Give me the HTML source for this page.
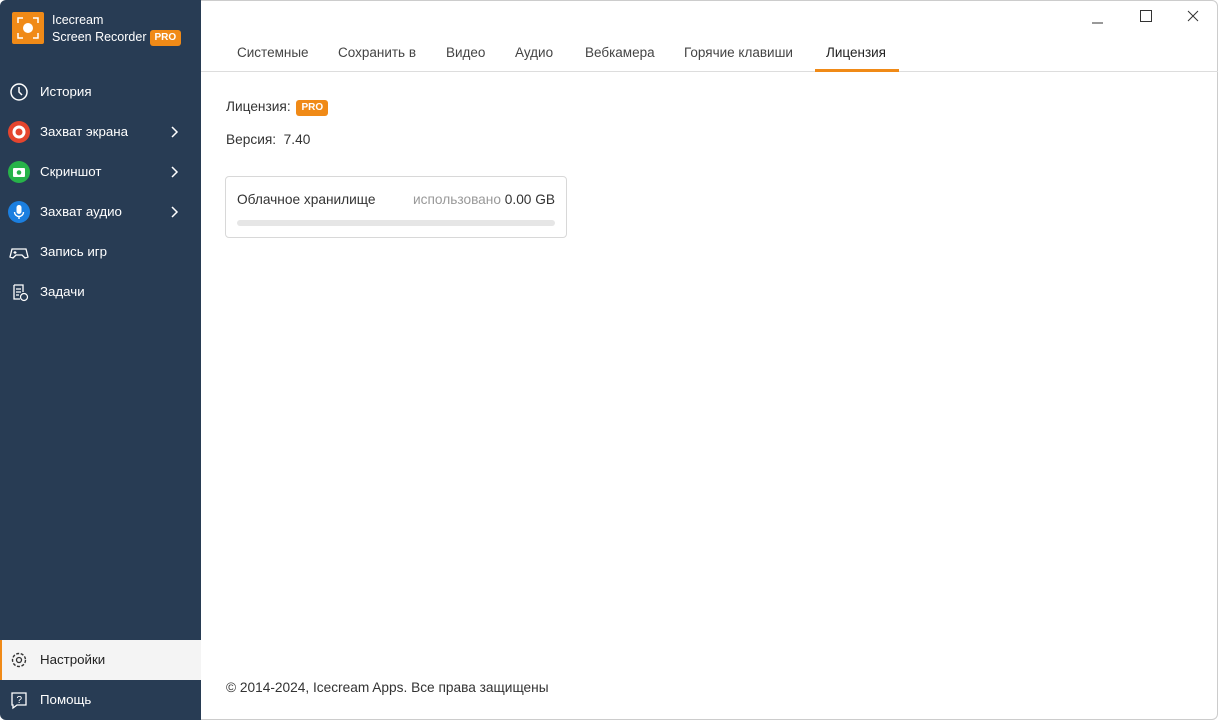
<!DOCTYPE html>
<html><head><meta charset="utf-8"><style>
*{box-sizing:border-box;margin:0;padding:0}
body{width:1218px;height:720px;overflow:hidden;background:#fff;font-family:"Liberation Sans","DejaVu Sans",sans-serif;position:relative}
.side{position:absolute;left:0;top:0;width:201px;height:720px;background:#283c54;border-radius:6px 0 0 6px}
.logo{position:absolute;left:12px;top:12px;width:32px;height:32px;background:#f08a17;border-radius:2px}
.brand{position:absolute;left:52px;top:12px;color:#fff;font-size:12.5px;line-height:17px}
.pro{display:inline-block;background:#f08a17;color:#fff;font-weight:bold;font-size:10px;padding:0 5px;border-radius:3px;line-height:16px;vertical-align:1px;margin-left:3px}
.it{position:absolute;left:0;width:201px;height:40px;color:#fff;font-size:13.3px;line-height:40px;padding-left:40px}
.ic{position:absolute;left:8px;top:9px;width:22px;height:22px}
.ch{position:absolute;left:171px;top:14px}
.sel{background:#f4f4f4;color:#222;border-left:2px solid #f08a17;padding-left:38px}
.tabs{position:absolute;left:201px;top:32px;right:0;height:40px;border-bottom:1px solid #ddd}
.tab{position:absolute;top:13px;font-size:13.5px;color:#444}
.t{position:absolute;font-size:13.7px;color:#333}
.card{position:absolute;left:225px;top:176px;width:342px;height:62px;border:1px solid #d8d8d8;border-radius:4px}
</style></head><body>
<div class="side">
 <div class="logo"><svg width="32" height="32"><g stroke="#fff" stroke-width="1.5" fill="none"><path d="M6 11V6h5M21 6h5v5M26 21v5h-5M11 26H6v-5"/></g><circle cx="16" cy="16" r="5" fill="#fff"/></svg></div>
 <div class="brand">Icecream<br>Screen Recorder<span class="pro">PRO</span></div>
 <div class="it" style="top:72px"><svg class="ic" viewBox="0 0 22 22"><circle cx="11" cy="11" r="8" fill="none" stroke="#fff" stroke-width="1.5"/><path d="M11 6v5l3 3" stroke="#fff" stroke-width="1.5" fill="none"/></svg>История</div>
 <div class="it" style="top:112px"><svg class="ic" viewBox="0 0 22 22"><circle cx="11" cy="11" r="11" fill="#e5452e"/><circle cx="11" cy="11" r="5" fill="none" stroke="#fff" stroke-width="3"/></svg>Захват экрана<svg class="ch" width="8" height="12"><path d="M1 1l5 5-5 5" stroke="#fff" stroke-width="1.5" fill="none"/></svg></div>
 <div class="it" style="top:152px"><svg class="ic" viewBox="0 0 22 22"><circle cx="11" cy="11" r="11" fill="#27b349"/><rect x="5" y="7" width="12" height="9" rx="1" fill="#fff"/><circle cx="11" cy="11.5" r="2.3" fill="#27b349"/></svg>Скриншот<svg class="ch" width="8" height="12"><path d="M1 1l5 5-5 5" stroke="#fff" stroke-width="1.5" fill="none"/></svg></div>
 <div class="it" style="top:192px"><svg class="ic" viewBox="0 0 22 22"><circle cx="11" cy="11" r="11" fill="#1b7fe0"/><rect x="8.5" y="4" width="5" height="9" rx="2.5" fill="#fff"/><path d="M6.5 11a4.5 4.5 0 009 0M11 15.5V18" stroke="#fff" stroke-width="1.4" fill="none"/></svg>Захват аудио<svg class="ch" width="8" height="12"><path d="M1 1l5 5-5 5" stroke="#fff" stroke-width="1.5" fill="none"/></svg></div>
 <div class="it" style="top:232px"><svg class="ic" viewBox="0 0 22 22"><path d="M4 8h14l2 8-3 1-3-3H8l-3 3-3-1z" fill="none" stroke="#fff" stroke-width="1.3"/><path d="M7 10v3M5.5 11.5h3" stroke="#fff" stroke-width="1.2"/></svg>Запись игр</div>
 <div class="it" style="top:272px"><svg class="ic" viewBox="0 0 22 22"><path d="M6 4h9v7M6 4v14h6" fill="none" stroke="#fff" stroke-width="1.3"/><path d="M8 8h5M8 11h5M8 14h3" stroke="#fff" stroke-width="1.2"/><circle cx="16" cy="16" r="3.5" fill="none" stroke="#fff" stroke-width="1.2"/></svg>Задачи</div>
 <div class="it sel" style="top:640px"><svg class="ic" viewBox="0 0 22 22" style="left:6px"><circle cx="11" cy="11" r="6.5" fill="none" stroke="#333" stroke-width="1.4" stroke-dasharray="3 1.6"/><circle cx="11" cy="11" r="2.5" fill="none" stroke="#333" stroke-width="1.3"/></svg>Настройки</div>
 <div class="it" style="top:680px"><svg class="ic" viewBox="0 0 22 22"><path d="M4 4h14v12H9l-4 3v-3H4z" fill="none" stroke="#fff" stroke-width="1.3"/><text x="8.5" y="14" fill="#fff" font-size="10" font-family="Liberation Sans">?</text></svg>Помощь</div>
</div>
<div style="position:absolute;left:201px;top:0;right:0;height:720px;border:1px solid #ccc;border-left:none;border-radius:0 6px 6px 0"></div>
<svg style="position:absolute;left:1090px;top:8px" width="120" height="20"><path d="M2 15h11" stroke="#333"/><rect x="50.5" y="2.5" width="11" height="11" fill="none" stroke="#333"/><path d="M98 3l10 10M108 3l-10 10" stroke="#333"/></svg>
<div class="tabs">
 <span class="tab" style="left:36px">Системные</span>
 <span class="tab" style="left:137px">Сохранить в</span>
 <span class="tab" style="left:245px">Видео</span>
 <span class="tab" style="left:314px">Аудио</span>
 <span class="tab" style="left:384px">Вебкамера</span>
 <span class="tab" style="left:483px">Горячие клавиши</span>
 <span class="tab" style="left:625px;color:#222">Лицензия</span>
 <div style="position:absolute;left:614px;top:37px;width:84px;height:3px;background:#f08a17"></div>
</div>
<div class="t" style="left:226px;top:99px">Лицензия: <span class="pro" style="margin-left:2px">PRO</span></div>
<div class="t" style="left:226px;top:132px">Версия:&nbsp; 7.40</div>
<div class="card">
 <div class="t" style="left:11px;top:15px">Облачное хранилище</div>
 <div class="t" style="right:11px;top:15px;color:#999">использовано <span style="color:#333">0.00 GB</span></div>
 <div style="position:absolute;left:11px;right:11px;top:43px;height:6px;border-radius:3px;background:#e6e6e6"></div>
</div>
<div class="t" style="left:226px;top:680px">© 2014-2024, Icecream Apps. Все права защищены</div>
</body></html>
